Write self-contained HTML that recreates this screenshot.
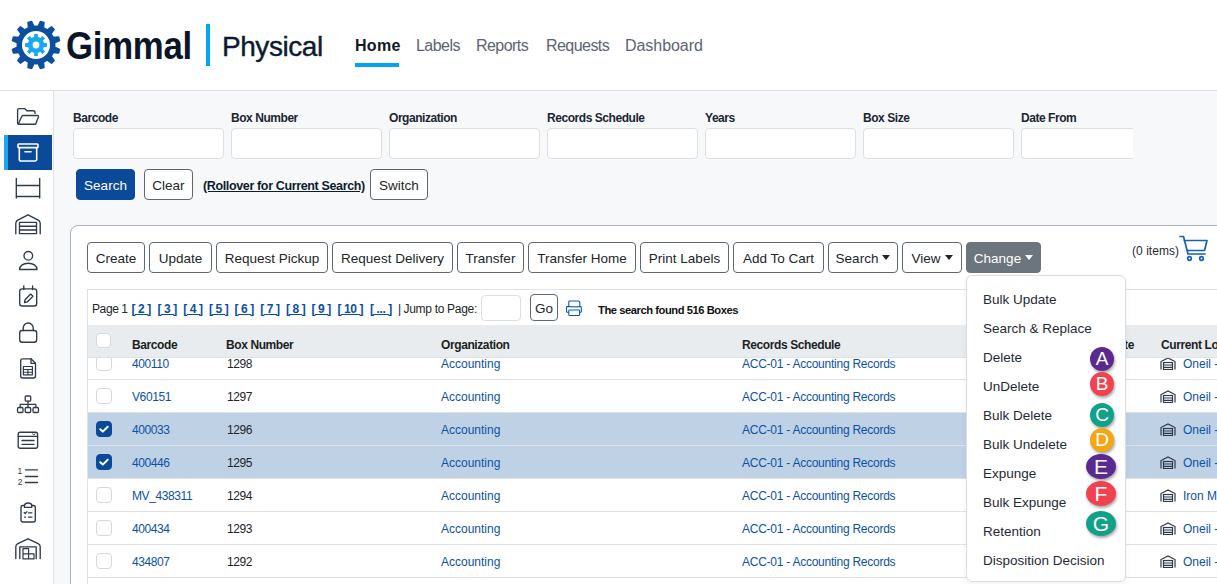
<!DOCTYPE html>
<html><head><meta charset="utf-8">
<style>
*{box-sizing:border-box;margin:0;padding:0}
html,body{width:1217px;height:584px;overflow:hidden;background:#fff;font-family:"Liberation Sans",sans-serif;color:#212529}
.a{position:absolute;white-space:nowrap}
#hdr{position:absolute;left:0;top:0;width:1217px;height:91px;background:#fff;border-bottom:1px solid #dde0e5}
#side{position:absolute;left:0;top:91px;width:54px;height:493px;background:#fff;border-right:1px solid #dfe2e6}
#main{position:absolute;left:54px;top:91px;width:1163px;height:493px;background:#f7f8fa;overflow:hidden}
.nav{position:absolute;top:36.7px;font-size:16px;color:#5b6471;letter-spacing:-0.55px}
.lbl{position:absolute;top:111px;font-size:12px;font-weight:bold;color:#1c2533;letter-spacing:-0.45px}
.inp{position:absolute;top:128px;width:151px;height:31px;background:#fff;border:1px solid #dcdfe4;border-radius:4px}
.btn{position:absolute;height:31px;border:1px solid #5f6770;border-radius:4px;background:#fff;font-size:13.5px;color:#212529;text-align:center;line-height:32.5px;white-space:nowrap}
.tb{top:242px}
.caret{display:inline-block;width:0;height:0;border-left:4px solid transparent;border-right:4px solid transparent;border-top:5px solid currentColor;vertical-align:3px;margin-left:4px}
.row{position:absolute;left:88px;width:1129px;height:33px;border-bottom:1px solid #dee2e6;background:#fff}
.row.sel{background:#bfd1e5}
.cell{position:absolute;top:10px;font-size:12px;white-space:nowrap}
.lnk{color:#0c51a8}
.cb{position:absolute;left:8px;top:8px;width:16px;height:16px;border:1px solid #d5d9de;border-radius:4px;background:#fff}
.cb.on{background:#0b4a9a;border-color:#0b4a9a}
.th{position:absolute;top:13px;font-size:12px;font-weight:bold;color:#1b1f24;letter-spacing:-0.4px;white-space:nowrap}
.dd{position:absolute;left:983px;font-size:13.5px;color:#1f2a37;white-space:nowrap}
.circ{position:absolute;border-radius:50%;color:#fff;font-size:19px;text-align:center;box-shadow:1px 2px 3px rgba(0,0,0,.35)}
.pg{top:301.5px;font-size:12px;color:#212529}
.u{text-decoration:underline}
.pg.lnk{color:#0b4fa3;font-weight:bold;letter-spacing:-0.4px}
.ic{position:absolute;left:14px;width:28px;height:24px}
</style></head><body>
<div id="hdr">
  <svg class="a" style="left:11px;top:20px" width="50" height="50" viewBox="0 0 50 50">
    <g fill="#0b4f9e" transform="translate(25,25)">
      <circle r="19.5"/>
      <g id="t"><path d="M-3.6,-18 L-2.6,-24 Q-2.5,-24.6 -1.9,-24.6 L1.9,-24.6 Q2.5,-24.6 2.6,-24 L3.6,-18 Z" transform="rotate(15)"/></g>
<use href="#t" transform="rotate(30)"/><use href="#t" transform="rotate(60)"/><use href="#t" transform="rotate(90)"/><use href="#t" transform="rotate(120)"/><use href="#t" transform="rotate(150)"/><use href="#t" transform="rotate(180)"/><use href="#t" transform="rotate(210)"/><use href="#t" transform="rotate(240)"/><use href="#t" transform="rotate(270)"/><use href="#t" transform="rotate(300)"/><use href="#t" transform="rotate(330)"/>
<circle r="14" fill="#fff"/>
      <g fill="#19a8f2">
        <circle r="8.2"/>
        <g id="s"><rect x="-1.9" y="-11" width="3.8" height="4" rx="0.4"/></g>
        <use href="#s" transform="rotate(45)"/><use href="#s" transform="rotate(90)"/><use href="#s" transform="rotate(135)"/>
        <use href="#s" transform="rotate(180)"/><use href="#s" transform="rotate(225)"/><use href="#s" transform="rotate(270)"/><use href="#s" transform="rotate(315)"/>
      </g>
      <circle r="3.4" fill="#fff"/>
    </g>
  </svg>
  <div class="a" style="left:66px;top:25px;font-size:38px;font-weight:bold;color:#0b1529;letter-spacing:-0.3px;transform:scaleX(0.915);transform-origin:0 0">Gimmal</div>
  <div class="a" style="left:206px;top:24px;width:4px;height:42px;background:#00a4f0"></div>
  <div class="a" style="left:222px;top:31px;font-size:28px;color:#0d1b30;letter-spacing:-0.45px;-webkit-text-stroke:0.4px #0d1b30">Physical</div>
  <div class="nav" style="left:355px;color:#111827;font-weight:bold;letter-spacing:0.3px">Home</div>
  <div class="a" style="left:355px;top:63px;width:44px;height:4px;background:#00a4f0"></div>
  <div class="nav" style="left:416px">Labels</div>
  <div class="nav" style="left:476px">Reports</div>
  <div class="nav" style="left:546px">Requests</div>
  <div class="nav" style="left:625px;letter-spacing:-0.05px">Dashboard</div>
</div>

<div id="side"></div>
<div id="main"></div>
<div class="a" style="left:4px;top:135px;width:48px;height:35px;background:#0b4a9a"></div>
<div class="a" style="left:4px;top:135px;width:4px;height:35px;background:#19a8f2"></div>
<svg class="a" style="left:0;top:90px" width="54" height="494" viewBox="0 90 54 494">
<g fill="none" stroke="#2f3a4a" stroke-width="1.35" stroke-linejoin="round" stroke-linecap="round">
  <!-- folder -->
  <path d="M17.6 123.5V110.2a1.6 1.6 0 0 1 1.6-1.6h5.4l2.3 2.2h6.2a2 2 0 0 1 2 2v0.6"/>
  <path d="M18.2 124.2L21.5 117a2 2 0 0 1 1.8-1.5h14.2a1 1 0 0 1 1 1.3L35.6 124.2z"/>
  <!-- shelf -->
  <path d="M16.3 178.5v19.5M39.7 178.5v19.5M16.3 185.5h23.4M16.3 196.5h23.4"/>
  <!-- warehouse -->
  <path d="M15.8 233.8v-10.3q0-2.2 2-3.3l10.2-5.4 10.2 5.4q2 1.1 2 3.3v10.3"/>
  <path d="M19.5 222.3h17v11.3h-17zM19.5 226.2h17M19.5 230h17"/>
  <!-- person -->
  <circle cx="28.3" cy="255.8" r="4.3"/>
  <path d="M19.6 269.5c0-3.8 3.8-6.3 8.7-6.3s8.7 2.5 8.7 6.3z"/>
  <!-- calendar edit -->
  <rect x="19.7" y="288.8" width="17" height="17.2" rx="2.5"/>
  <path d="M23.8 286v3.5M32.6 286v3.5"/>
  <path d="M24.5 302.5l0.6-2.8 5.6-5.6 2.2 2.2-5.6 5.6z"/>
  <!-- lock -->
  <path d="M23.2 330.5v-2.5a5 5 0 0 1 10 0v2.5"/>
  <rect x="19.7" y="330.5" width="17" height="11.7" rx="2.5"/>
  <!-- document -->
  <path d="M22.7 358.8h8.3l4.5 4.5v12.7a2 2 0 0 1-2 2H22.7a2 2 0 0 1-2-2V360.8a2 2 0 0 1 2-2z"/>
  <path d="M31 358.8v4.5h4.5"/>
  <rect x="23.4" y="366.5" width="9" height="8.3" stroke-width="1.2"/>
  <path d="M23.4 369.5h9M23.4 372.2h9M27.9 369.5v5.3" stroke-width="1.1"/>
  <!-- hierarchy -->
  <rect x="25.2" y="396" width="5.5" height="5.2" rx="1" stroke-width="1.3"/>
  <path d="M28 401.2v3.2M20.2 407.5v-3.1h15.7v3.1M28 404.4v3.1" stroke-width="1.3"/>
  <rect x="17.5" y="407.5" width="5.5" height="5" rx="1.2" stroke-width="1.3"/>
  <rect x="25.2" y="407.5" width="5.5" height="5" rx="1.2" stroke-width="1.3"/>
  <rect x="33" y="407.5" width="5.5" height="5" rx="1.2" stroke-width="1.3"/>
  <!-- browser -->
  <rect x="18.2" y="432.2" width="19.4" height="16" rx="2"/>
  <path d="M18.2 436.3h19.4M22 440.5h12M22 444.3h12"/>
  <path d="M32.5 433.8l1.3 1.2 1.3-1.2" stroke-width="1"/>
  <!-- numbered list -->
  <path d="M25.5 469.8h12M25.5 476.5h12M25.5 482.5h12"/>
  <!-- clipboard -->
  <path d="M24.5 505.5h-1.5a2 2 0 0 0-2 2v12.5a2 2 0 0 0 2 2h10.3a2 2 0 0 0 2-2v-12.5a2 2 0 0 0-2-2h-1.5"/>
  <path d="M24.5 507.3v-2.2a3.7 2.5 0 0 1 7.3 0v2.2z"/>
  <path d="M24.2 512.5l1 1 1.7-1.8M28.5 512.8h3.5M24.5 517.2h1M28.5 517.2h3.5" stroke-width="1.2"/>
  <!-- warehouse 2 -->
  <path d="M15.8 558.5v-11.8q0-2 2-3l10.2-4.9 10.2 4.9q2 1 2 3v11.8"/>
  <path d="M19.8 558.5v-11.6h16.4v11.6"/>
  <path d="M23 548.7h5.6v5.2H23zM23 553.9h5.6v5H23zM28.6 553.9h5.4v5h-5.4z" stroke-width="1.2"/>
</g>
<!-- archive box selected -->
<g fill="none" stroke="#fff" stroke-width="1.6" stroke-linejoin="round">
  <rect x="18" y="144" width="20" height="3.6" rx="0.8"/>
  <path d="M19.3 147.6v11.6a1.8 1.8 0 0 0 1.8 1.8h13.8a1.8 1.8 0 0 0 1.8-1.8v-11.6"/>
  <path d="M25 151.8h6" stroke-linecap="round"/>
</g>
<text x="17.6" y="474.3" font-family="Liberation Sans" font-size="8.5" fill="#2f3a4a">1</text>
<text x="17.8" y="484.8" font-family="Liberation Sans" font-size="8.5" fill="#2f3a4a">2</text>
</svg>

<div id="form">
  <div class="lbl" style="left:73px">Barcode</div>
  <div class="lbl" style="left:231px">Box Number</div>
  <div class="lbl" style="left:389px">Organization</div>
  <div class="lbl" style="left:547px">Records Schedule</div>
  <div class="lbl" style="left:705px">Years</div>
  <div class="lbl" style="left:863px">Box Size</div>
  <div class="lbl" style="left:1021px">Date From</div>
  <div class="inp" style="left:73px"></div>
  <div class="inp" style="left:231px"></div>
  <div class="inp" style="left:389px"></div>
  <div class="inp" style="left:547px"></div>
  <div class="inp" style="left:705px"></div>
  <div class="inp" style="left:863px"></div>
  <div class="inp" style="left:1021px;width:112px;border-right:none;border-radius:4px 0 0 4px"></div>
  <div class="btn" style="left:76px;top:169px;width:59px;background:#0b4a9a;border-color:#0b4a9a;color:#fff">Search</div>
  <div class="btn" style="left:144px;top:169px;width:49px">Clear</div>
  <div class="a" style="left:203px;top:178.7px;font-size:12.5px;font-weight:bold;color:#0d1b30;text-decoration:underline;letter-spacing:-0.36px">(Rollover for Current Search)</div>
  <div class="btn" style="left:370px;top:169px;width:58px">Switch</div>
</div>

<div id="card" class="a" style="left:70px;top:225px;width:1200px;height:400px;background:#fff;border:1px solid #acb2b9;border-radius:8px"></div>
<div class="btn tb" style="left:87px;width:58px">Create</div>
<div class="btn tb" style="left:149px;width:63px">Update</div>
<div class="btn tb" style="left:216px;width:112px">Request Pickup</div>
<div class="btn tb" style="left:332px;width:121px">Request Delivery</div>
<div class="btn tb" style="left:457px;width:67px">Transfer</div>
<div class="btn tb" style="left:528px;width:108px">Transfer Home</div>
<div class="btn tb" style="left:640px;width:89px">Print Labels</div>
<div class="btn tb" style="left:733px;width:91px">Add To Cart</div>
<div class="btn tb" style="left:828px;width:70px">Search<span class="caret"></span></div>
<div class="btn tb" style="left:902px;width:60px">View<span class="caret"></span></div>
<div class="btn tb" style="left:966px;width:75px;background:#6c757d;border-color:#6c757d;color:#fff">Change<span class="caret"></span></div>
<div class="a" style="left:1132px;top:244px;font-size:12px;color:#1f2937;letter-spacing:0.05px">(0 items)</div>
<svg class="a" style="left:1178px;top:233.5px" width="32" height="28" viewBox="0 0 32 28">
  <g fill="none" stroke="#1560b8" stroke-width="1.7" stroke-linecap="round" stroke-linejoin="round">
    <path d="M2 2.5h3.5l4.5 17.5h17"/>
    <path d="M6.5 6.5h22.5l-2.5 10h-17"/>
    <circle cx="11.5" cy="24.5" r="1.8"/><circle cx="23.5" cy="24.5" r="1.8"/>
  </g>
</svg>
<div class="a" style="left:87px;top:289px;width:1140px;height:37px;border:1px solid #dee2e6;border-right:none;background:#fff"></div>
<div class="a pg" style="left:92px;letter-spacing:-0.4px">Page 1</div>
<div class="a pg lnk u" style="left:131.5px">[ 2 ]</div><div class="a pg lnk u" style="left:157.5px">[ 3 ]</div><div class="a pg lnk u" style="left:183.3px">[ 4 ]</div><div class="a pg lnk u" style="left:209px">[ 5 ]</div><div class="a pg lnk u" style="left:234.6px">[ 6 ]</div><div class="a pg lnk u" style="left:260.2px">[ 7 ]</div><div class="a pg lnk u" style="left:285.9px">[ 8 ]</div><div class="a pg lnk u" style="left:311.5px">[ 9 ]</div><div class="a pg lnk u" style="left:337.5px">[ 10 ]</div><div class="a pg lnk u" style="left:370px">[ ... ]</div><div class="a pg" style="left:398px">|</div><div class="a pg" style="left:403.5px;letter-spacing:-0.3px">Jump to Page:</div>

<div class="a" style="left:481px;top:295px;width:40px;height:26px;border:1px solid #dcdfe4;border-radius:4px;background:#fff"></div>
<div class="btn" style="left:530px;top:294px;width:28px;height:27px;line-height:28px">Go</div>
<svg class="a" style="left:565px;top:300px" width="18" height="17" viewBox="0 0 18 17">
  <g fill="none" stroke="#0d56b0" stroke-width="1.1" stroke-linejoin="round">
    <path d="M3.8 6.6V1.8q0-.8.8-.8h8.6q1.6 0 1.6 1.6v4"/>
    <path d="M3.8 12.2H2.3q-.8 0-.8-.8V7.4q0-.8.8-.8h13.2q.8 0 .8.8v4q0 .8-.8.8h-1.5"/>
    <path d="M5.5 6.9h8" stroke="#7d9cc4" stroke-width="1"/>
    <rect x="3.8" y="10" width="10.8" height="5.5" rx="0.8"/>
  </g>
</svg>
<div class="a" style="left:598px;top:303.5px;font-size:11.2px;font-weight:bold;color:#111;letter-spacing:-0.45px">The search found 516 Boxes</div>
<div id="tbl" class="a" style="left:87px;top:325px;width:1140px;height:260px;border-left:1px solid #dee2e6;overflow:hidden;background:#fff">
<div class="row" style="left:0;top:21px;height:33px;border-top:1px solid #dee2e6;border-bottom:none"><div class="cb"></div><div class="cell lnk" style="left:44px;letter-spacing:-0.4px">400110</div><div class="cell" style="left:139px;letter-spacing:-0.4px">1298</div><div class="cell lnk" style="left:353px">Accounting</div><div class="cell lnk" style="left:654px;letter-spacing:-0.25px">ACC-01 - Accounting Records</div><svg class="a" style="left:1072px;top:10px" width="16" height="13" viewBox="0 0 16 13"><g fill="none" stroke="#2f3a4a" stroke-width="1.2"><path d="M1 12.5V4.5L8 1l7 3.5v8"/><rect x="3.5" y="5.5" width="9" height="7"/><path d="M3.5 8h9M3.5 10.3h9"/></g></svg><div class="cell lnk" style="left:1095px">Oneil -</div></div>
<div class="row" style="left:0;top:54px;height:33px;border-top:1px solid #dee2e6;border-bottom:none"><div class="cb"></div><div class="cell lnk" style="left:44px;letter-spacing:-0.4px">V60151</div><div class="cell" style="left:139px;letter-spacing:-0.4px">1297</div><div class="cell lnk" style="left:353px">Accounting</div><div class="cell lnk" style="left:654px;letter-spacing:-0.25px">ACC-01 - Accounting Records</div><svg class="a" style="left:1072px;top:10px" width="16" height="13" viewBox="0 0 16 13"><g fill="none" stroke="#2f3a4a" stroke-width="1.2"><path d="M1 12.5V4.5L8 1l7 3.5v8"/><rect x="3.5" y="5.5" width="9" height="7"/><path d="M3.5 8h9M3.5 10.3h9"/></g></svg><div class="cell lnk" style="left:1095px">Oneil -</div></div>
<div class="row sel" style="left:0;top:87px;height:33px;border-top:1px solid #dee2e6;border-bottom:none"><div class="cb on"><svg width=14 height=14 viewBox='0 0 14 14' style='position:absolute;left:0;top:0'><path d='M3.3 7.2l2.5 2.4 4.9-4.9' fill=none stroke=#fff stroke-width=2 stroke-linecap=round stroke-linejoin=round /></svg></div><div class="cell lnk" style="left:44px;letter-spacing:-0.4px">400033</div><div class="cell" style="left:139px;letter-spacing:-0.4px">1296</div><div class="cell lnk" style="left:353px">Accounting</div><div class="cell lnk" style="left:654px;letter-spacing:-0.25px">ACC-01 - Accounting Records</div><svg class="a" style="left:1072px;top:10px" width="16" height="13" viewBox="0 0 16 13"><g fill="none" stroke="#2f3a4a" stroke-width="1.2"><path d="M1 12.5V4.5L8 1l7 3.5v8"/><rect x="3.5" y="5.5" width="9" height="7"/><path d="M3.5 8h9M3.5 10.3h9"/></g></svg><div class="cell lnk" style="left:1095px">Oneil -</div></div>
<div class="row sel" style="left:0;top:120px;height:33px;border-top:1px solid #dee2e6;border-bottom:none"><div class="cb on"><svg width=14 height=14 viewBox='0 0 14 14' style='position:absolute;left:0;top:0'><path d='M3.3 7.2l2.5 2.4 4.9-4.9' fill=none stroke=#fff stroke-width=2 stroke-linecap=round stroke-linejoin=round /></svg></div><div class="cell lnk" style="left:44px;letter-spacing:-0.4px">400446</div><div class="cell" style="left:139px;letter-spacing:-0.4px">1295</div><div class="cell lnk" style="left:353px">Accounting</div><div class="cell lnk" style="left:654px;letter-spacing:-0.25px">ACC-01 - Accounting Records</div><svg class="a" style="left:1072px;top:10px" width="16" height="13" viewBox="0 0 16 13"><g fill="none" stroke="#2f3a4a" stroke-width="1.2"><path d="M1 12.5V4.5L8 1l7 3.5v8"/><rect x="3.5" y="5.5" width="9" height="7"/><path d="M3.5 8h9M3.5 10.3h9"/></g></svg><div class="cell lnk" style="left:1095px">Oneil -</div></div>
<div class="row" style="left:0;top:153px;height:33px;border-top:1px solid #dee2e6;border-bottom:none"><div class="cb"></div><div class="cell lnk" style="left:44px;letter-spacing:-0.4px">MV_438311</div><div class="cell" style="left:139px;letter-spacing:-0.4px">1294</div><div class="cell lnk" style="left:353px">Accounting</div><div class="cell lnk" style="left:654px;letter-spacing:-0.25px">ACC-01 - Accounting Records</div><svg class="a" style="left:1072px;top:10px" width="16" height="13" viewBox="0 0 16 13"><g fill="none" stroke="#2f3a4a" stroke-width="1.2"><path d="M1 12.5V4.5L8 1l7 3.5v8"/><rect x="3.5" y="5.5" width="9" height="7"/><path d="M3.5 8h9M3.5 10.3h9"/></g></svg><div class="cell lnk" style="left:1095px">Iron M</div></div>
<div class="row" style="left:0;top:186px;height:33px;border-top:1px solid #dee2e6;border-bottom:none"><div class="cb"></div><div class="cell lnk" style="left:44px;letter-spacing:-0.4px">400434</div><div class="cell" style="left:139px;letter-spacing:-0.4px">1293</div><div class="cell lnk" style="left:353px">Accounting</div><div class="cell lnk" style="left:654px;letter-spacing:-0.25px">ACC-01 - Accounting Records</div><svg class="a" style="left:1072px;top:10px" width="16" height="13" viewBox="0 0 16 13"><g fill="none" stroke="#2f3a4a" stroke-width="1.2"><path d="M1 12.5V4.5L8 1l7 3.5v8"/><rect x="3.5" y="5.5" width="9" height="7"/><path d="M3.5 8h9M3.5 10.3h9"/></g></svg><div class="cell lnk" style="left:1095px">Oneil -</div></div>
<div class="row" style="left:0;top:219px;height:33px;border-top:1px solid #dee2e6;border-bottom:none"><div class="cb"></div><div class="cell lnk" style="left:44px;letter-spacing:-0.4px">434807</div><div class="cell" style="left:139px;letter-spacing:-0.4px">1292</div><div class="cell lnk" style="left:353px">Accounting</div><div class="cell lnk" style="left:654px;letter-spacing:-0.25px">ACC-01 - Accounting Records</div><svg class="a" style="left:1072px;top:10px" width="16" height="13" viewBox="0 0 16 13"><g fill="none" stroke="#2f3a4a" stroke-width="1.2"><path d="M1 12.5V4.5L8 1l7 3.5v8"/><rect x="3.5" y="5.5" width="9" height="7"/><path d="M3.5 8h9M3.5 10.3h9"/></g></svg><div class="cell lnk" style="left:1095px">Oneil -</div></div>
<div class="a" style="left:0;top:252px;width:1140px;height:1px;background:#dee2e6"></div>
<div class="a" style="left:0;top:0;width:1140px;height:33px;background:#e9ecef;border-bottom:1px solid #dee2e6"><div class="cb" style="left:8px;top:8px;width:15px;height:15px"></div><div class="th" style="left:44px">Barcode</div><div class="th" style="left:138px">Box Number</div><div class="th" style="left:353px">Organization</div><div class="th" style="left:654px">Records Schedule</div><div class="th" style="right:7px;left:auto;width:200px;text-align:right;margin-left:0;position:absolute;left:846px">Destruction Date</div><div class="th" style="left:1073px">Current Location</div></div>
</div>
<div class="a" style="left:966px;top:275px;width:160px;height:307px;background:#fff;border:1px solid #d9dce1;border-radius:6px;box-shadow:0 2px 6px rgba(0,0,0,.06)"></div>
<div class="dd" style="top:292.1px">Bulk Update</div><div class="dd" style="top:321.1px">Search &amp; Replace</div><div class="dd" style="top:350.1px">Delete</div><div class="dd" style="top:379.1px">UnDelete</div><div class="dd" style="top:408.1px">Bulk Delete</div><div class="dd" style="top:437.2px">Bulk Undelete</div><div class="dd" style="top:466.2px">Expunge</div><div class="dd" style="top:495.2px">Bulk Expunge</div><div class="dd" style="top:524.2px">Retention</div><div class="dd" style="top:553.2px">Disposition Decision</div>
<div class="circ" style="left:1090.0px;top:346.5px;width:24px;height:24px;line-height:24px;background:#5b2a90">A</div><div class="circ" style="left:1090.0px;top:371.7px;width:24px;height:24px;line-height:24px;background:#f0434f">B</div><div class="circ" style="left:1090.0px;top:402.5px;width:24px;height:24px;line-height:24px;background:#11a088">C</div><div class="circ" style="left:1090.0px;top:428.0px;width:24px;height:24px;line-height:24px;background:#f4a614">D</div><div class="circ" style="left:1086.0px;top:453.5px;width:30px;height:25px;line-height:25px;background:#5b2a90;font-size:21px">E</div><div class="circ" style="left:1086.0px;top:481.1px;width:30px;height:25px;line-height:25px;background:#f0434f;font-size:21px">F</div><div class="circ" style="left:1086.0px;top:511.1px;width:30px;height:25px;line-height:25px;background:#11a088;font-size:21px">G</div>
</body></html>
